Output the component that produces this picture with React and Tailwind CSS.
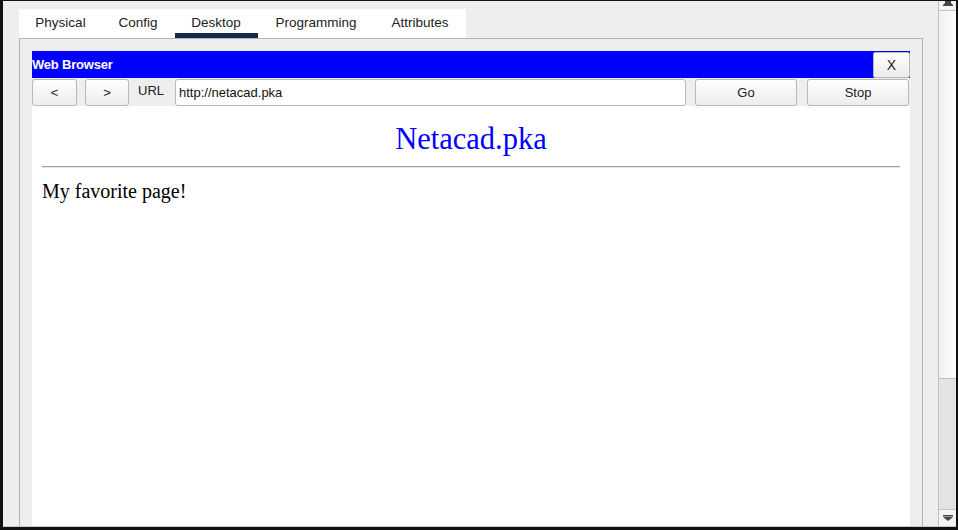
import React from 'react';

const tabs = [
    { name: 'Physical', w: 'w-[83px]' },
    { name: 'Config', w: 'w-[72px]' },
    { name: 'Desktop', w: 'w-[84px]' },
    { name: 'Programming', w: 'w-[116px]' },
    { name: 'Attributes', w: 'w-[92px]' },
];

function Btn({ children, className = '' }) {
    return (
        <div className={`flex items-center justify-center h-[27px] rounded-[3px] border border-[#b8b8b8] bg-gradient-to-b from-white to-[#ececec] text-[13px] text-[#222] ${className}`}>
            {children}
        </div>
    );
}

export default function App() {
    return (
        <div className="w-[958px] h-[530px] bg-[#111] pl-[3px] pr-[2px] pt-px pb-[3px] overflow-hidden" style={{ fontFamily: '"Liberation Sans", Arial, sans-serif' }}>
            <div className="flex h-full bg-[#eeeeee] border-b border-[#c8c8c8]">
                {/* Main column */}
                <div className="flex-1 flex flex-col pl-4 pr-[15px] pt-2">
                    {/* Tabs */}
                    <div className="flex self-start h-[29px] bg-white">
                        {tabs.map(t => (
                            <div key={t.name} className={`relative ${t.w} flex items-center justify-center text-[13.5px] text-[#222]`}>
                                <span className="-mt-px">{t.name}</span>
                                {t.name === 'Desktop' && <div className="absolute left-px right-0 bottom-0 h-[5px] bg-[#16284a]" />}
                            </div>
                        ))}
                    </div>

                    {/* Panel */}
                    <div className="flex-1 flex flex-col border-l border-r border-t border-[#b4b4b4] pl-3 pr-3 pt-3">
                        {/* Title bar */}
                        <div className="flex items-stretch h-[27px] bg-[#0000ff]">
                            <div className="flex-1 flex items-center text-white text-[13px] font-bold tracking-[-0.2px]">Web Browser</div>
                            <div className="w-[37px] mt-px flex items-center justify-center rounded-[2px] border border-[#b8b8b8] bg-gradient-to-b from-white to-[#ececec] text-[14px] text-[#222]">X</div>
                        </div>

                        {/* Toolbar */}
                        <div className="flex items-center h-[28px] bg-[#eeeeee] pt-px">
                            <Btn className="w-[45px]">&lt;</Btn>
                            <Btn className="w-[44px] ml-2">&gt;</Btn>
                            <div className="w-[46px] pl-[9px] text-[13px] text-[#222] -mt-[3px]">URL</div>
                            <div className="w-[511px] h-[27px] flex items-center pl-[3px] bg-white border border-[#b8b8b8] rounded-[3px] text-[13px] text-[#111]">http://netacad.pka</div>
                            <Btn className="w-[102px] ml-[9px]">Go</Btn>
                            <Btn className="w-[102px] ml-[10px]">Stop</Btn>
                        </div>

                        {/* Page */}
                        <div className="flex-1 bg-white px-[10px] pt-[16px]" style={{ fontFamily: '"Liberation Serif", "Times New Roman", serif' }}>
                            <div className="text-center text-[30.5px] leading-[34px] text-[#0000ff]">Netacad.pka</div>
                            <div className="mt-[10px] h-[2px] border-t border-[#a0a0a0] bg-[#e6e6e6]" />
                            <div className="mt-[11px] text-[20px] leading-[24px] text-black">My favorite page!</div>
                        </div>
                    </div>
                </div>

                {/* Scrollbar */}
                <div className="w-[18px] flex flex-col border-l border-[#c0c0c0]">
                    <div className="h-[10px] flex justify-center items-start border-b border-[#c4c4c4] bg-[#f4f4f4]">
                        <svg width="10" height="6" viewBox="0 0 10 6"><path d="M2 0 L8 0 L8 2 L10 4 L0 4 L2 2 Z" fill="#444" /><rect x="0" y="4" width="10" height="1" fill="#444" /></svg>
                    </div>
                    <div className="h-[368px] bg-gradient-to-r from-[#f0f0f0] to-white border-b border-[#bdbdbd]" />
                    <div className="flex-1 bg-[#e3e3e3]" />
                    <div className="h-[17px] flex justify-center items-center border-t border-[#c4c4c4] bg-[#f4f4f4]">
                        <svg width="10" height="6" viewBox="0 0 10 6"><rect x="0" y="0" width="10" height="1.5" fill="#444" /><path d="M0 2 L10 2 L5 6 Z" fill="#444" /></svg>
                    </div>
                </div>
            </div>
        </div>
    );
}
